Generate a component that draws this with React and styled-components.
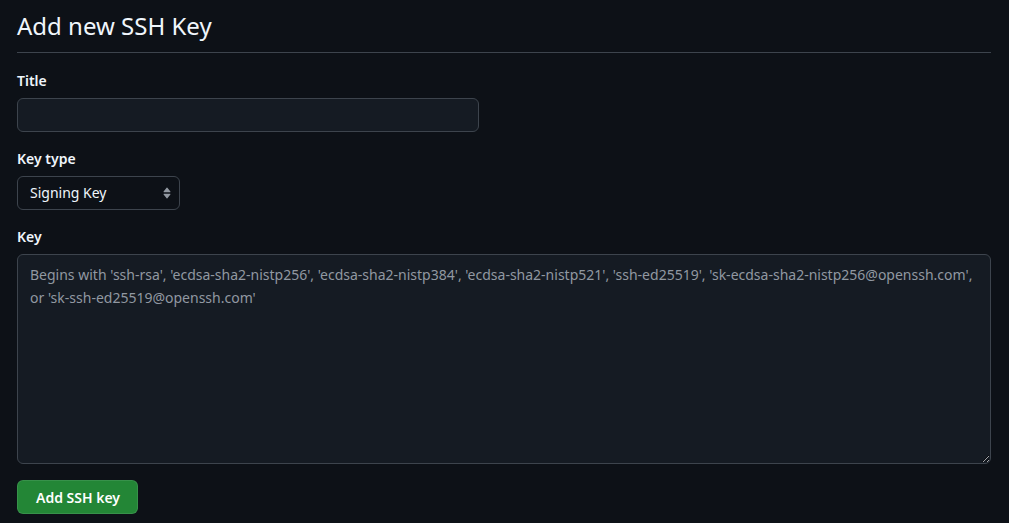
import React from "react";
import styled, { createGlobalStyle } from "styled-components";

const GlobalStyle = createGlobalStyle`
  html, body {
    margin: 0;
    background-color: #0d1117;
  }
  body {
    font-family: "Noto Sans", "Liberation Sans", sans-serif;
    color: #f0f6fc;
  }
`;

export default function App() {
  return (
    <>
      <GlobalStyle />
      <Page>
        <Header>
          <h2>Add new SSH Key</h2>
        </Header>
        <Form onSubmit={(e) => e.preventDefault()}>
          <Group>
            <Label htmlFor="ssh_key_title">Title</Label>
            <TextInput id="ssh_key_title" type="text" />
          </Group>
          <Group>
            <Label htmlFor="ssh_key_type">Key type</Label>
            <SelectWrap>
              <Select id="ssh_key_type" defaultValue="signing">
                <option value="auth">Authentication Key</option>
                <option value="signing">Signing Key</option>
              </Select>
              {/* up/down arrows */}
              <SelectIcon viewBox="0 0 8 12" width="8" height="12">
                <path d="M0.6 4.6 L3.6 0.8 a0.5 0.5 0 0 1 0.8 0 L7.4 4.6 A0.4 0.4 0 0 1 7.1 5.2 H0.9 A0.4 0.4 0 0 1 0.6 4.6z" />
                <path d="M0.6 7.4 L3.6 11.2 a0.5 0.5 0 0 0 0.8 0 L7.4 7.4 A0.4 0.4 0 0 0 7.1 6.8 H0.9 A0.4 0.4 0 0 0 0.6 7.4z" />
              </SelectIcon>
            </SelectWrap>
          </Group>
          <Group>
            <Label htmlFor="ssh_key_key">Key</Label>
            <TextArea
              id="ssh_key_key"
              placeholder="Begins with 'ssh-rsa', 'ecdsa-sha2-nistp256', 'ecdsa-sha2-nistp384', 'ecdsa-sha2-nistp521', 'ssh-ed25519', 'sk-ecdsa-sha2-nistp256@openssh.com', or 'sk-ssh-ed25519@openssh.com'"
            />
          </Group>
          <PrimaryButton type="submit">Add SSH key</PrimaryButton>
        </Form>
      </Page>
    </>
  );
}

const Page = styled.div`
  padding: 8px 18px 0 17px;
`;

const Header = styled.div`
  padding-bottom: 8px;
  border-bottom: 1px solid #3d444d;

  h2 {
    margin: 0;
    font-size: 24px;
    font-weight: 400;
    line-height: 36px;
    color: #f0f6fc;
  }
`;

const Form = styled.form`
  display: flex;
  flex-direction: column;
  align-items: flex-start;
  padding-top: 17px;
`;

const Group = styled.div`
  display: flex;
  flex-direction: column;
  align-items: flex-start;
  width: 100%;
  margin-bottom: 16px;
`;

const Label = styled.label`
  font-size: 14px;
  font-weight: 600;
  line-height: 22px;
  margin-bottom: 6px;
  color: #f0f6fc;
`;

const fieldBase = `
  box-sizing: border-box;
  font-family: "Noto Sans", "Liberation Sans", sans-serif;
  font-size: 14px;
  color: #f0f6fc;
  background-color: #151b23;
  border: 1px solid #3d444d;
  border-radius: 6px;
  outline: none;
`;

const TextInput = styled.input`
  ${fieldBase}
  width: 462px;
  height: 34px;
  padding: 5px 12px;
`;

const SelectWrap = styled.div`
  position: relative;
  width: 163px;
`;

const Select = styled.select`
  ${fieldBase}
  appearance: none;
  width: 100%;
  height: 34px;
  padding: 0 28px 0 12px;
  background-color: #0d1117;
  line-height: 20px;
`;

const SelectIcon = styled.svg`
  position: absolute;
  right: 9px;
  top: 11px;
  fill: #9198a1;
  pointer-events: none;
`;

const TextArea = styled.textarea`
  ${fieldBase}
  width: 100%;
  height: 210px;
  padding: 8px 12px;
  line-height: 23px;
  resize: vertical;

  &::placeholder {
    color: #9198a1;
    opacity: 1;
  }
`;

const PrimaryButton = styled.button`
  box-sizing: border-box;
  height: 34px;
  padding: 0 17px 0 18px;
  font-family: "Noto Sans", "Liberation Sans", sans-serif;
  font-size: 14px;
  font-weight: 600;
  color: #ffffff;
  background-color: #238636;
  border: 1px solid rgba(240, 246, 252, 0.1);
  border-radius: 6px;
  cursor: pointer;
`;
